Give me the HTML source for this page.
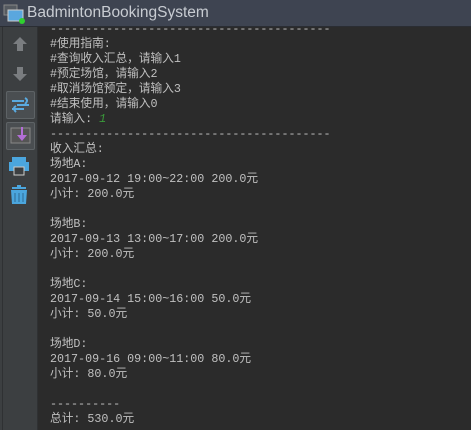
<!DOCTYPE html>
<html><head><meta charset="utf-8"><style>
body{margin:0;width:471px;height:430px;overflow:hidden;background:#2b2b2b;position:relative;font-family:"Liberation Mono","Noto Sans CJK SC",monospace}
#title{position:absolute;left:0;top:0;width:471px;height:26px;background:#3e4451;border-bottom:1px solid #2a2d33}
#title span{position:absolute;left:27px;top:4px;font:15.5px "Liberation Sans",sans-serif;color:#c8ccd2}
#side{position:absolute;left:0;top:27px;width:37px;height:403px;background:#3c3f41;border-right:1px solid #2f3133}
#side:before{content:"";position:absolute;left:2px;top:0;width:1px;height:403px;background:#2f3133}
#con{position:absolute;left:50px;top:22px;color:#c0c0c0;font-size:11.7px;line-height:15px;white-space:pre}
.btn{position:absolute;left:6px;width:27px;height:26px;border:1px solid #5e6366;border-radius:2px;background:#4a4e51}
</style></head><body>
<div id="title">
<svg width="24" height="24" style="position:absolute;left:3px;top:2px"><rect x="1" y="3" width="13" height="10" fill="#555a60" stroke="#888" /><rect x="5" y="8" width="15" height="11" fill="#5aa7de" stroke="#ccc"/><circle cx="19" cy="19" r="3" fill="#2fd02f"/></svg>
<span>BadmintonBookingSystem</span></div>
<div id="side">
<svg width="37" height="403" style="position:absolute;left:0;top:0">
<path d="M20 10 l-7 7 h4 v7 h6 v-7 h4z" fill="#7a7d80"/>
<path d="M17 40 v7 h-4 l7 7 l7 -7 h-4 v-7z" fill="#7a7d80"/>
</svg>
<div class="btn" style="top:64px"><svg width="27" height="26"><g stroke="#5aaae0" stroke-width="2" fill="none"><path d="M5 9 h12 M10 13 h12 M5 17 h12"/><path d="M18 6 q4 2 0 6 M9 14 q-4 2 0 6"/></g></svg></div>
<div class="btn" style="top:95px"><svg width="27" height="26"><rect x="4" y="5" width="19" height="15" fill="#555" stroke="#888"/><path d="M14 4 v8 h-4 l5 6 l5 -6 h-4 v-8z" fill="#b36ed6"/></svg></div>
<svg width="37" height="60" style="position:absolute;left:0;top:128px"><rect x="12" y="2" width="14" height="5" fill="#4ba6de"/><rect x="9" y="7" width="20" height="9" fill="#4ba6de"/><rect x="14" y="12" width="10" height="8" fill="#3c3f41" stroke="#ccc"/><rect x="12" y="32" width="14" height="2" fill="#4ba6de"/><rect x="17" y="30" width="4" height="2" fill="#4ba6de"/><path d="M11 35 h16 l-1 14 h-14z" fill="#4ba6de"/><path d="M15 38 v9 M19 38 v9 M23 38 v9" stroke="#2d6a94"/></svg>
</div>
<div id="con">----------------------------------------
#使用指南:
#查询收入汇总，请输入1
#预定场馆，请输入2
#取消场馆预定，请输入3
#结束使用，请输入0
请输入: <i style="color:#3a9a3a">1</i>
----------------------------------------
收入汇总:
场地A:
2017-09-12 19:00~22:00 200.0元
小计: 200.0元

场地B:
2017-09-13 13:00~17:00 200.0元
小计: 200.0元

场地C:
2017-09-14 15:00~16:00 50.0元
小计: 50.0元

场地D:
2017-09-16 09:00~11:00 80.0元
小计: 80.0元

----------
总计: 530.0元</div>
</body></html>
